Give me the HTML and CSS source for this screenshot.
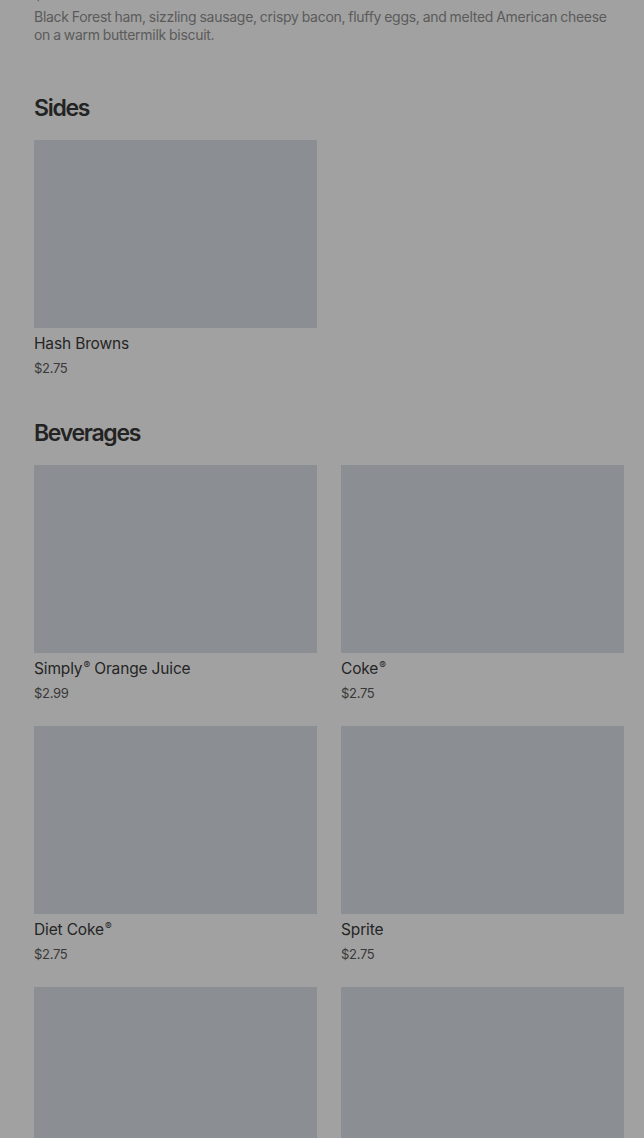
FILE: index.html
```html
<!DOCTYPE html>
<html lang="en">
<head>
<meta charset="utf-8">
<title>Menu</title>
<link rel="stylesheet" href="styles.css">
</head>
<body>
<main class="page">
  <div class="item-top">
    <div class="prev-price">$6.49</div>
    <p class="desc">Black Forest ham, sizzling sausage, crispy bacon, fluffy eggs, and melted American cheese on a warm buttermilk biscuit.</p>
  </div>

  <section class="section">
    <h2 class="section-title">Sides</h2>
    <div class="grid">
      <div class="card">
        <div class="thumb"></div>
        <div class="name">Hash Browns</div>
        <div class="price">$2.75</div>
      </div>
    </div>
  </section>

  <section class="section">
    <h2 class="section-title">Beverages</h2>
    <div class="grid">
      <div class="card">
        <div class="thumb"></div>
        <div class="name">Simply<sup>®</sup> Orange Juice</div>
        <div class="price">$2.99</div>
      </div>
      <div class="card">
        <div class="thumb"></div>
        <div class="name">Coke<sup>®</sup></div>
        <div class="price">$2.75</div>
      </div>
      <div class="card">
        <div class="thumb"></div>
        <div class="name">Diet Coke<sup>®</sup></div>
        <div class="price">$2.75</div>
      </div>
      <div class="card">
        <div class="thumb"></div>
        <div class="name">Sprite</div>
        <div class="price">$2.75</div>
      </div>
      <div class="card">
        <div class="thumb"></div>
        <div class="name">Dasani<sup>®</sup> Water</div>
        <div class="price">$2.49</div>
      </div>
      <div class="card">
        <div class="thumb"></div>
        <div class="name">Hot Coffee</div>
        <div class="price">$2.29</div>
      </div>
    </div>
  </section>
</main>
</body>
</html>
```
FILE: styles.css
```css
html, body {
  margin: 0;
  padding: 0;
  background: #a1a1a1;
  overflow: hidden;
}
body {
  font-family: Inter, "Liberation Sans", Arial, sans-serif;
  color: #2a2a2a;
}
.page {
  padding: 0 20px 0 34px;
}
.item-top {
  margin-top: -10px;
}
.prev-price {
  height: 18px;
  font-size: 13px;
  line-height: 10px;
  color: #3a3a3a;
  overflow: hidden;
}
.desc {
  margin: 0;
  font-size: 14px;
  line-height: 18px;
  color: #5b5b5b;
  letter-spacing: -0.28px;
  word-spacing: -0.6px;
}
.section {
  margin-top: 48px;
}
.section + .section {
  margin-top: 40px;
}
.section-title {
  margin: 0 0 16px;
  font-size: 23px;
  line-height: 32px;
  font-weight: 600;
  letter-spacing: -1.3px;
  color: #232323;
}
.grid {
  display: grid;
  grid-template-columns: 283px 283px;
  column-gap: 24px;
  row-gap: 24px;
}
.card {
  display: flex;
  flex-direction: column;
}
.thumb {
  height: 188px;
  background: #8b8e93;
}
.name {
  margin-top: 6px;
  font-size: 15.5px;
  line-height: 20px;
  font-weight: 400;
  color: #252525;
  letter-spacing: -0.15px;
}
.name sup {
  font-size: 10px;
  line-height: 0;
  vertical-align: 5px;
  margin-left: 1px;
}
.price {
  margin-top: 5px;
  font-size: 13px;
  line-height: 18px;
  color: #383838;
  letter-spacing: -0.3px;
}
```
